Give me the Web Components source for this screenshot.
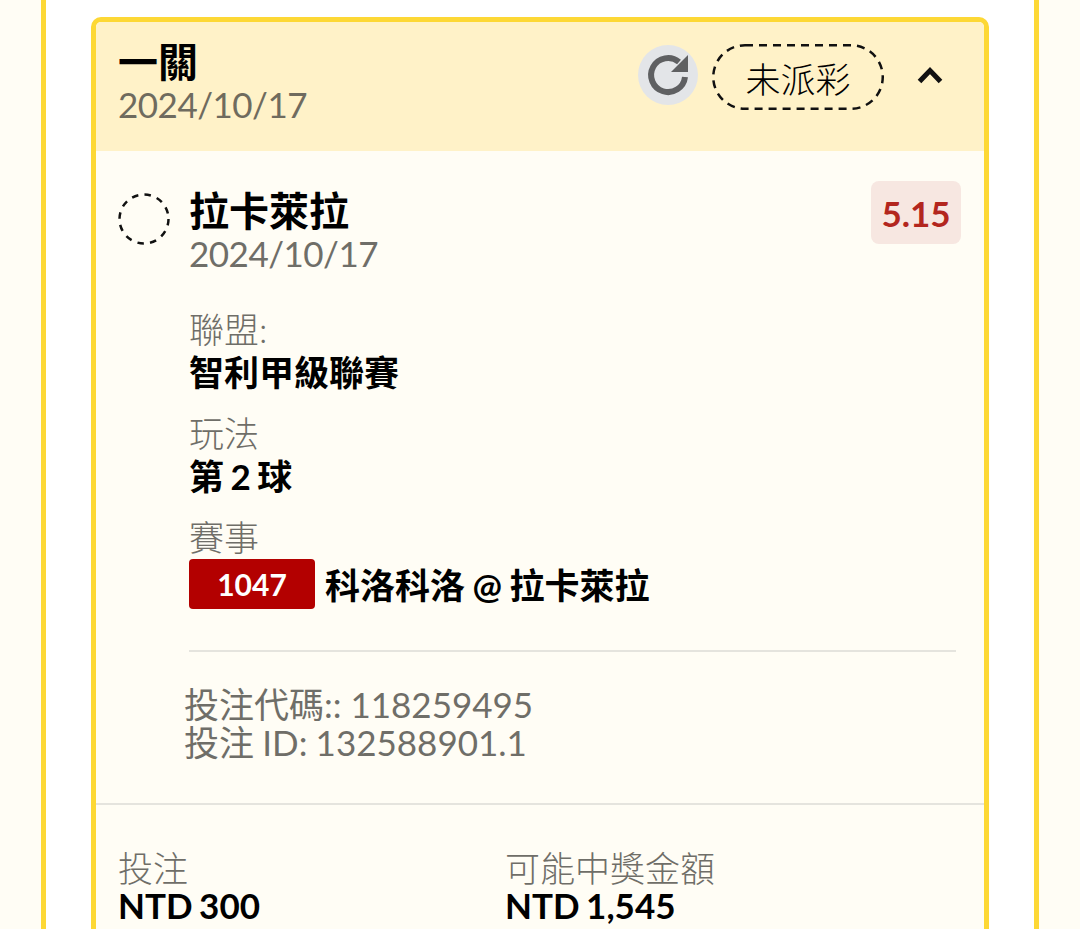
<!DOCTYPE html>
<html lang="zh-Hant">
<head>
<meta charset="utf-8">
<title>Bet slip</title>
<style>
  html, body { margin: 0; height: 929px; overflow: hidden; background: #fffdf5; }
  body { font-family: Lato, "Noto Sans CJK TC", sans-serif; color: #000; }
</style>
</head>
<body>
<bet-panel>
  <bet-card>
    <bet-header slot="header" title-text="一關" date="2024/10/17" status="未派彩"></bet-header>
    <bet-selection name="拉卡萊拉" date="2024/10/17" odds="5.15">
      <bet-field label="聯盟:">智利甲級聯賽</bet-field>
      <bet-field label="玩法">第 2 球</bet-field>
      <bet-field label="賽事" tag="1047">科洛科洛 @ 拉卡萊拉</bet-field>
    </bet-selection>
    <bet-ids>
      <div>投注代碼:: 118259495</div>
      <div style="word-spacing: -.75px">投注 ID: 132588901.1</div>
    </bet-ids>
    <bet-totals>
      <bet-total label="投注">NTD 300</bet-total>
      <bet-total label="可能中獎金額">NTD 1,545</bet-total>
    </bet-totals>
  </bet-card>
</bet-panel>

<script>
  // Small helper: each element gets its own open shadow root
  function define(tag, markup, setup) {
    customElements.define(tag, class extends HTMLElement {
      constructor() {
        super();
        this.attachShadow({ mode: 'open' }).innerHTML = markup;
      }
      connectedCallback() {
        if (setup) setup(this, this.shadowRoot);
      }
    });
  }

  const text = (root, sel, value) => { root.querySelector(sel).textContent = value; };

  // Outer panel with yellow side rails
  define('bet-panel', `
    <style>
      :host { display: block; margin: 0 41px; height: 929px; box-sizing: border-box;
        background: #fff; border-left: 5px solid #fdd835; border-right: 5px solid #fdd835;
        padding: 17px 45px 0; overflow: hidden; }
    </style>
    <slot></slot>`);

  define('bet-card', `
    <style>
      :host { display: block; height: 960px; box-sizing: border-box; background: #fffdf5;
        border: 5px solid #fdd835; border-radius: 10px; overflow: hidden; }
    </style>
    <slot name="header"></slot>
    <slot></slot>`);

  define('bet-header', `
    <style>
      :host { display: flex; height: 129px; box-sizing: border-box; background: #fff2c8;
        padding: 18px 41px 0 22px; justify-content: space-between; align-items: flex-start; }
      .title { font-size: 40px; font-weight: 700; line-height: 44px; }
      .date { font-size: 35px; letter-spacing: -.5px; line-height: 40px; color: #6f6b5e; }
      .right { display: flex; align-items: center; margin-top: 4px; }
      .reload { width: 60px; height: 60px; border-radius: 50%; background: #e3e5e8; display: flex;
        align-items: center; justify-content: center; margin: -4px 14px 0 0; }
      .status { width: 172px; height: 66px; box-sizing: border-box; display: flex; align-items: center;
        justify-content: center; font-size: 35px; font-weight: 300; margin-right: 33px; position: relative; }
      .status svg { position: absolute; inset: 0; }
      .chevron { margin-top: -4px; }
    </style>
    <div>
      <div class="title"></div>
      <div class="date"></div>
    </div>
    <div class="right">
      <div class="reload">
        <svg width="44" height="44" viewBox="0 0 44 44" fill="none">
          <path d="M39 24A17 17 0 1 1 33 9" stroke="#5f6062" stroke-width="6"/>
          <path d="M42 2V19H25z" fill="#5f6062"/>
        </svg>
      </div>
      <div class="status">
        <svg width="172" height="66" viewBox="0 0 172 66" fill="none">
          <rect x="1.25" y="1.25" width="169.5" height="63.5" rx="31.75" stroke="#111" stroke-width="2.5" stroke-dasharray="8 6"/>
        </svg>
        <span></span>
      </div>
      <svg class="chevron" width="26" height="18" viewBox="0 0 26 18" fill="none">
        <path d="M2.5 15.5 13 4.5l10.5 11" stroke="#111" stroke-width="5"/>
      </svg>
    </div>`, (el, root) => {
      text(root, '.title', el.getAttribute('title-text'));
      text(root, '.date', el.getAttribute('date'));
      text(root, '.status span', el.getAttribute('status'));
    });

  define('bet-selection', `
    <style>
      :host { display: grid; grid-template-columns: 71px 1fr; box-sizing: border-box;
        padding: 30px 23px 0 22px; }
      .mark { margin-top: 12px; }
      .top { display: flex; justify-content: space-between; align-items: flex-start; }
      .name { font-size: 40px; font-weight: 700; line-height: 44px; margin-top: 8px; }
      .date { font-size: 35px; letter-spacing: -.5px; line-height: 40px; color: #6f6e68; }
      .odds { width: 90px; height: 63px; background: #f7e7e1; border-radius: 8px; color: #b3261e;
        font-size: 35px; font-weight: 700; display: flex; align-items: center; justify-content: center; }
      .fields { display: flex; flex-direction: column; gap: 16px; margin-top: 36px; margin-right: 5px; }
      .rule { height: 2px; background: #e5e4de; margin-top: 41px; margin-right: 5px; }
    </style>
    <svg class="mark" width="52" height="52" viewBox="0 0 52 52" fill="none">
      <circle cx="26" cy="26" r="24.5" stroke="#111" stroke-width="2.5" stroke-dasharray="6.5 6.3"/>
    </svg>
    <div>
      <div class="top">
        <div>
          <div class="name"></div>
          <div class="date"></div>
        </div>
        <div class="odds"></div>
      </div>
      <div class="fields"><slot></slot></div>
      <div class="rule"></div>
    </div>`, (el, root) => {
      text(root, '.name', el.getAttribute('name'));
      text(root, '.date', el.getAttribute('date'));
      text(root, '.odds', el.getAttribute('odds'));
    });

  define('bet-field', `
    <style>
      :host { display: block; }
      .label { font-size: 35px; font-weight: 300; line-height: 40px; color: #6f6e68; }
      .value { display: flex; align-items: center; font-size: 35px; font-weight: 700; line-height: 44px; height: 50px;
        margin-top: -2px; word-spacing: -2px; }
      :host([tag]) .value { margin-top: 2px; word-spacing: -1px; }
      :host([tag]) .txt { padding-top: 1px; }
      .tag { display: none; width: 126px; height: 50px; border-radius: 4px; background: #b30000; color: #fff;
        font-size: 30px; align-items: center; justify-content: center; margin-right: 10px; }
    </style>
    <div class="label"></div>
    <div class="value"><span class="tag"></span><span class="txt"><slot></slot></span></div>`, (el, root) => {
      text(root, '.label', el.getAttribute('label'));
      const tag = el.getAttribute('tag');
      if (tag) {
        const node = root.querySelector('.tag');
        node.textContent = tag;
        node.style.display = 'flex';
      }
    });

  define('bet-ids', `
    <style>
      :host { display: block; padding: 33px 24px 42px 88px; font-size: 35px; line-height: 38px;
        color: #6f6e68; border-bottom: 2px solid #e5e4de; }
    </style>
    <slot></slot>`);

  define('bet-totals', `
    <style>
      :host { display: grid; grid-template-columns: 387px 1fr; padding: 45px 22px 0; }
    </style>
    <slot></slot>`);

  define('bet-total', `
    <style>
      :host { display: block; }
      .label { font-size: 35px; font-weight: 300; line-height: 36px; color: #6f6e68; }
      .value { font-size: 35px; font-weight: 700; line-height: 36px; margin-top: 1px; word-spacing: -2px; }
    </style>
    <div class="label"></div>
    <div class="value"><slot></slot></div>`, (el, root) => {
      text(root, '.label', el.getAttribute('label'));
    });
</script>
</body>
</html>
